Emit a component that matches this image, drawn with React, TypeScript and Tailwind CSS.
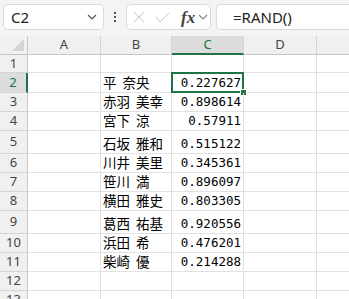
import React from "react";

const rows = [
  { n: "1", h: "h-[18px]", name: "", val: "" },
  { n: "2", h: "h-[20px]", name: "平 奈央", val: "0.227627" },
  { n: "3", h: "h-[19px]", name: "赤羽 美幸", val: "0.898614" },
  { n: "4", h: "h-[19px]", name: "宮下 涼", val: "0.57911" },
  { n: "5", h: "h-[23px]", name: "石坂 雅和", val: "0.515122" },
  { n: "6", h: "h-[19px]", name: "川井 美里", val: "0.345361" },
  { n: "7", h: "h-[19px]", name: "笹川 満", val: "0.896097" },
  { n: "8", h: "h-[19px]", name: "横田 雅史", val: "0.803305" },
  { n: "9", h: "h-[23px]", name: "葛西 祐基", val: "0.920556" },
  { n: "10", h: "h-[19px]", name: "浜田 希", val: "0.476201" },
  { n: "11", h: "h-[19px]", name: "柴崎 優", val: "0.214288" },
  { n: "12", h: "h-[19px]", name: "", val: "" },
  { n: "13", h: "h-[19px]", name: "", val: "" },
];

const ui = "font-['Noto_Sans','Liberation_Sans',sans-serif]";
const jp = "font-['Noto_Sans_CJK_JP',sans-serif]";
const mono = "font-['DejaVu_Sans_Mono',monospace]";

const Chevron = ({ c = "#555" }: { c?: string }) => (
  <svg width="10" height="6" viewBox="0 0 10 6">
    <polyline points="1,1 5,5 9,1" fill="none" stroke={c} strokeWidth="1.2" />
  </svg>
);

const App: React.FC = () => {
  return (
    <div className="h-[299px] w-[349px] overflow-hidden bg-white">
      {/* formula bar */}
      <div className={`flex h-[36px] items-start bg-[#f4f4f4] pt-[4px] ${ui}`}>
        <div className="ml-[3px] flex h-[26px] w-[101px] items-center rounded-[5px] border border-[#dadada] bg-white pl-[7px] pr-[6px]">
          <span className="flex-1 text-[15px] text-[#222]">C2</span>
          <Chevron />
        </div>
        <div className="flex h-[26px] w-[22px] flex-col items-center justify-center gap-[2px]">
          <span className="h-[2px] w-[2px] bg-[#555]" />
          <span className="h-[2px] w-[2px] bg-[#555]" />
          <span className="h-[2px] w-[2px] bg-[#555]" />
        </div>
        <div className="flex h-[26px] w-[85px] items-center rounded-[5px] border border-[#dadada] bg-white pl-[6px]">
          <svg width="12" height="12" viewBox="0 0 12 12">
            <path d="M1 1L11 11M11 1L1 11" stroke="#c4c4c4" strokeWidth="1" fill="none" />
          </svg>
          <svg className="ml-[10px]" width="15" height="11" viewBox="0 0 15 11">
            <polyline points="1,5 5,10 14,1" stroke="#c4c4c4" strokeWidth="1" fill="none" />
          </svg>
          <span className="ml-[11px] font-['Liberation_Serif',serif] text-[17px] font-semibold italic leading-none text-[#444]">
            fx
          </span>
          <span className="ml-[3px]">
            <Chevron c="#888" />
          </span>
        </div>
        <div className="ml-[5px] flex h-[26px] flex-1 items-center rounded-l-[5px] border border-r-0 border-[#dadada] bg-white pl-[16px] text-[15px] text-[#222]">
          =RAND()
        </div>
      </div>

      {/* column headers */}
      <div className={`flex h-[19px] bg-[#f0f0f0] text-[13px] text-[#444] ${ui}`}>
        <div className="relative w-[28px] border-r border-b border-[#c6c6c6]">
          <svg className="absolute right-[3px] bottom-[3px]" width="12" height="12" viewBox="0 0 12 12">
            <polygon points="12,0 12,12 0,12" fill="#d4d4d4" />
          </svg>
        </div>
        <div className="flex w-[73px] items-center justify-center border-r border-b border-[#d4d4d4] border-b-[#c6c6c6]">A</div>
        <div className="flex w-[71px] items-center justify-center border-r border-b border-[#d4d4d4] border-b-[#c6c6c6]">B</div>
        <div className="flex w-[72px] items-center justify-center border-r border-[#d4d4d4] border-b-2 border-b-[#217346] bg-[#dcdcdc] text-[#217346]">
          C
        </div>
        <div className="flex w-[73px] items-center justify-center border-r border-b border-[#d4d4d4] border-b-[#c6c6c6]">D</div>
        <div className="flex-1 border-b border-[#c6c6c6]" />
      </div>

      {/* rows */}
      {rows.map((r) => {
        const sel = r.n === "2";
        return (
          <div key={r.n} className={`flex ${r.h}`}>
            <div
              className={`flex w-[28px] items-center justify-center border-b border-[#d4d4d4] text-[13px] ${ui} ${
                sel
                  ? "border-r-2 border-r-[#217346] bg-[#dcdcdc] text-[#217346]"
                  : "border-r border-r-[#c6c6c6] bg-[#f0f0f0] text-[#444]"
              }`}
            >
              {r.n}
            </div>
            <div className="w-[73px] border-r border-b border-[#e1e1e1]" />
            <div className={`flex w-[71px] items-end whitespace-pre border-r border-b border-[#e1e1e1] pb-[1px] pl-[2px] text-[13.5px] leading-[17px] text-black ${jp}`}>
              {r.name.replace(" ", "  ")}
            </div>
            <div className={`relative flex w-[72px] items-end justify-end border-r border-b border-[#e1e1e1] pr-[2px] pb-[2px] text-[12.5px] leading-[15px] text-black ${mono}`}>
              {r.val}
              {sel && (
                <>
                  <div className="absolute -top-[1px] -left-[1px] -right-[1px] -bottom-[1px] border-2 border-[#217346]" />
                  <div className="absolute -right-[4px] -bottom-[4px] h-[7px] w-[7px] border border-white bg-[#217346]" />
                </>
              )}
            </div>
            <div className="w-[73px] border-r border-b border-[#e1e1e1]" />
            <div className="flex-1 border-b border-[#e1e1e1]" />
          </div>
        );
      })}
    </div>
  );
};

export default App;
